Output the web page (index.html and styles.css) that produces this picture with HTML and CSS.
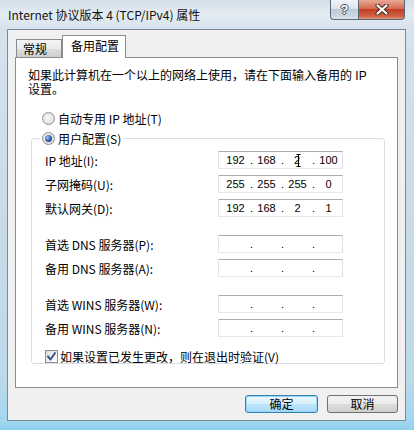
FILE: index.html
```html
<!DOCTYPE html>
<html>
<head>
<meta charset="utf-8">
<link rel="stylesheet" href="styles.css">
</head>
<body>
<div class="window">
  <div class="titlebar">
    <div class="title">Internet 协议版本 4 (TCP/IPv4) 属性</div>
    <div class="caption-btns">
      <div class="cbtn help"><span class="qmark">?</span></div>
      <div class="cbtn close">
        <svg width="14" height="11" viewBox="0 0 14 11"><path d="M2.5 1.5 L11.5 9.5 M11.5 1.5 L2.5 9.5" stroke="#4a2a22" stroke-width="4.2" stroke-linecap="round" fill="none"/><path d="M2.5 1.5 L11.5 9.5 M11.5 1.5 L2.5 9.5" stroke="#ffffff" stroke-width="2.2" stroke-linecap="round" fill="none"/></svg>
      </div>
    </div>
  </div>
  <div class="client">
    <div class="tabs">
      <div class="tab">常规</div>
      <div class="tab active">备用配置</div>
    </div>
    <div class="panel">
      <p class="desc">如果此计算机在一个以上的网络上使用，请在下面输入备用的 IP<br>设置。</p>
      <div class="radio-row"><span class="radio"></span><span>自动专用 IP 地址(T)</span></div>
      <fieldset class="group">
        <legend class="legend"><span class="radio on"></span><span>用户配置(S)</span></legend>
        <div class="rows">
          <div class="row"><span>IP 地址(I):</span>
            <div class="ip"><span class="seg">192</span><span class="dot">.</span><span class="seg">168</span><span class="dot">.</span><span class="seg">2<svg class="ibeam" width="5" height="13" viewBox="0 0 5 13"><path d="M0.5 0.5 H4.5 M2.5 0.5 V12.5 M0.5 12.5 H4.5" stroke="#000" stroke-width="1" fill="none"/></svg></span><span class="dot">.</span><span class="seg">100</span></div>
          </div>
          <div class="row"><span>子网掩码(U):</span>
            <div class="ip"><span class="seg">255</span><span class="dot">.</span><span class="seg">255</span><span class="dot">.</span><span class="seg">255</span><span class="dot">.</span><span class="seg">0</span></div>
          </div>
          <div class="row"><span>默认网关(D):</span>
            <div class="ip"><span class="seg">192</span><span class="dot">.</span><span class="seg">168</span><span class="dot">.</span><span class="seg">2</span><span class="dot">.</span><span class="seg">1</span></div>
          </div>
        </div>
        <div class="rows sep">
          <div class="row"><span>首选 DNS 服务器(P):</span>
            <div class="ip"><span class="seg"></span><span class="dot">.</span><span class="seg"></span><span class="dot">.</span><span class="seg"></span><span class="dot">.</span><span class="seg"></span></div>
          </div>
          <div class="row"><span>备用 DNS 服务器(A):</span>
            <div class="ip"><span class="seg"></span><span class="dot">.</span><span class="seg"></span><span class="dot">.</span><span class="seg"></span><span class="dot">.</span><span class="seg"></span></div>
          </div>
        </div>
        <div class="rows sep">
          <div class="row"><span>首选 WINS 服务器(W):</span>
            <div class="ip"><span class="seg"></span><span class="dot">.</span><span class="seg"></span><span class="dot">.</span><span class="seg"></span><span class="dot">.</span><span class="seg"></span></div>
          </div>
          <div class="row"><span>备用 WINS 服务器(N):</span>
            <div class="ip"><span class="seg"></span><span class="dot">.</span><span class="seg"></span><span class="dot">.</span><span class="seg"></span><span class="dot">.</span><span class="seg"></span></div>
          </div>
        </div>
        <div class="check-row">
          <span class="check"><svg width="11" height="11" viewBox="0 0 11 11"><path d="M2 5.5 L4.5 8.5 L9 2" stroke="#3d5687" stroke-width="2" fill="none" stroke-linecap="round" stroke-linejoin="round"/></svg></span>
          <span>如果设置已发生更改，则在退出时验证(V)</span>
        </div>
      </fieldset>
    </div>
    <div class="footer">
      <button class="btn default">确定</button>
      <button class="btn cancel">取消</button>
    </div>
  </div>
</div>
</body>
</html>
```

FILE: styles.css
```css
* { box-sizing: border-box; }
html, body { margin: 0; padding: 0; }
body {
  width: 414px;
  height: 430px;
  overflow: hidden;
  font-family: "Noto Sans CJK SC", "Liberation Sans", sans-serif;
  font-size: 12px;
  color: #000;
  background: linear-gradient(to bottom, #d3dfea 0px, #e4ecf2 14px, #d6e2ec 29px, #cbdbe7 200px, #bcd9ea 380px, #a2d7ef 421px, #8fd0ee 430px);
}
.window {
  width: 414px;
  height: 430px;
  display: flex;
  flex-direction: column;
}
.titlebar {
  height: 29px;
  display: flex;
  justify-content: space-between;
  align-items: flex-start;
  padding: 0 9px 0 8px;
}
.title {
  margin-top: 7px;
  font-size: 12px;
  line-height: 16px;
  color: #111;
}
.caption-btns {
  display: flex;
  height: 20px;
}
.cbtn {
  height: 20px;
  display: flex;
  align-items: center;
  justify-content: center;
  border: 1px solid #56677a;
  border-top: none;
}
.help {
  width: 28px;
  border-right: none;
  border-radius: 0 0 0 4px;
  background: linear-gradient(#f0f3f6, #dce4eb 45%, #bfcbd7 50%, #ccd7e1 85%, #dfe7ee);
}
.qmark {
  font-family: "Liberation Sans", sans-serif;
  font-weight: bold;
  font-size: 13px;
  line-height: 13px;
  color: #fff;
  text-shadow: 1px 0 0 #3d4d5e, -1px 0 0 #3d4d5e, 0 1px 0 #3d4d5e, 0 -1px 0 #3d4d5e;
}
.close {
  width: 47px;
  border-radius: 0 0 4px 0;
  background: linear-gradient(#e7a997, #d56c52 45%, #c33d22 50%, #cf6446 85%, #e39a7a);
}
.client {
  margin-left: 7px;
  width: 399px;
  height: 392px;
  background: #f0f0f0;
  border: 1px solid #7b8a99;
  padding: 5px 7px 7px 7px;
  display: flex;
  flex-direction: column;
}
.tabs {
  display: flex;
  align-items: flex-end;
  padding-left: 1px;
  margin-bottom: -1px;
  position: relative;
  z-index: 1;
}
.tab {
  height: 19px;
  width: 46px;
  padding-left: 6px;
  line-height: 17px;
  border: 1px solid #898c95;
  background: linear-gradient(#f4f4f4, #ebebeb 50%, #dddddd 50%, #cfcfcf);
}
.tab.active {
  width: 64px;
  height: 23px;
  padding-left: 8px;
  line-height: 20px;
  border-left: 1px solid #898c95;
  border-bottom: none;
  background: #fff;
}
.panel {
  height: 331px;
  flex: none;
  background: #fff;
  border: 1px solid #898c95;
  padding: 11px 12px 0 12px;
}
.desc {
  margin: 0;
  font-family: "Liberation Sans", "Noto Sans CJK SC", sans-serif;
  line-height: 14px;
}
.radio-row {
  margin-top: 13px;
  height: 16px;
  display: flex;
  align-items: center;
  gap: 3px;
  padding-left: 14px;
}
.radio {
  display: inline-block;
  position: relative;
  width: 13px;
  height: 13px;
  border-radius: 50%;
  border: 1px solid #8f9090;
  background: radial-gradient(circle at 45% 45%, #f8f8f8 0, #e6e6e6 55%, #c9c9c9 100%);
  flex: none;
}
.radio.on::after {
  content: "";
  position: absolute;
  left: 2px;
  top: 2px;
  width: 7px;
  height: 7px;
  border-radius: 50%;
  background: radial-gradient(circle at 35% 35%, #9cc8f2 0, #2a5ca8 55%, #10306e 100%);
}
.group {
  margin: 4px 0 0 3px;
  padding: 2px 0 0 13px;
  border: 1px solid #d5dfe5;
  border-radius: 3px;
  min-width: 0;
}
.legend {
  margin-left: -5px;
  padding: 0 2px;
  height: 16px;
  display: flex;
  align-items: center;
  gap: 3px;
}
.rows.sep {
  margin-top: 12px;
}
.row {
  display: grid;
  grid-template-columns: 173px 125px;
  align-items: center;
  height: 24px;
}
.ip {
  height: 18px;
  border: 1px solid;
  border-color: #abadb3 #dbdfe6 #e3e9ef #e2e3ea;
  background: #fff;
  display: flex;
  align-items: center;
  padding-left: 2px;
  overflow: hidden;
  font-family: "Liberation Sans", sans-serif;
  font-size: 11px;
  line-height: 14px;
}
.seg {
  width: 29px;
  flex: none;
  text-align: center;
  display: inline-flex;
  justify-content: center;
  align-items: center;
}
.dot {
  width: 2px;
  flex: none;
  text-align: center;
}
.ibeam {
  margin-left: -4px;
}
.check-row {
  margin-top: 9px;
  height: 14px;
  display: flex;
  align-items: center;
  gap: 2px;
}
.check {
  width: 13px;
  height: 13px;
  border: 1px solid #8f8f8f;
  background: linear-gradient(135deg, #d9d9d9, #f7f7f7 70%, #fff);
  display: flex;
  align-items: center;
  justify-content: center;
  flex: none;
}
.footer {
  margin-top: 7px;
  display: flex;
  justify-content: flex-end;
  gap: 9px;
}
.btn {
  height: 18px;
  padding: 0;
  font-family: "Noto Sans CJK SC", sans-serif;
  font-size: 12px;
  line-height: 16px;
  color: #000;
  border: 1px solid #707070;
  border-radius: 3px;
  background: linear-gradient(#f2f2f2, #ebebeb 50%, #dddddd 50%, #cfcfcf);
}
.btn.default {
  width: 73px;
  border-color: #3c7fb1;
  background: linear-gradient(#eaf6fd, #d9f0fc 50%, #bee6fd 50%, #a7d9f5);
  box-shadow: inset 0 0 0 1px #94d6f6;
}
.btn.cancel {
  width: 71px;
}
```
